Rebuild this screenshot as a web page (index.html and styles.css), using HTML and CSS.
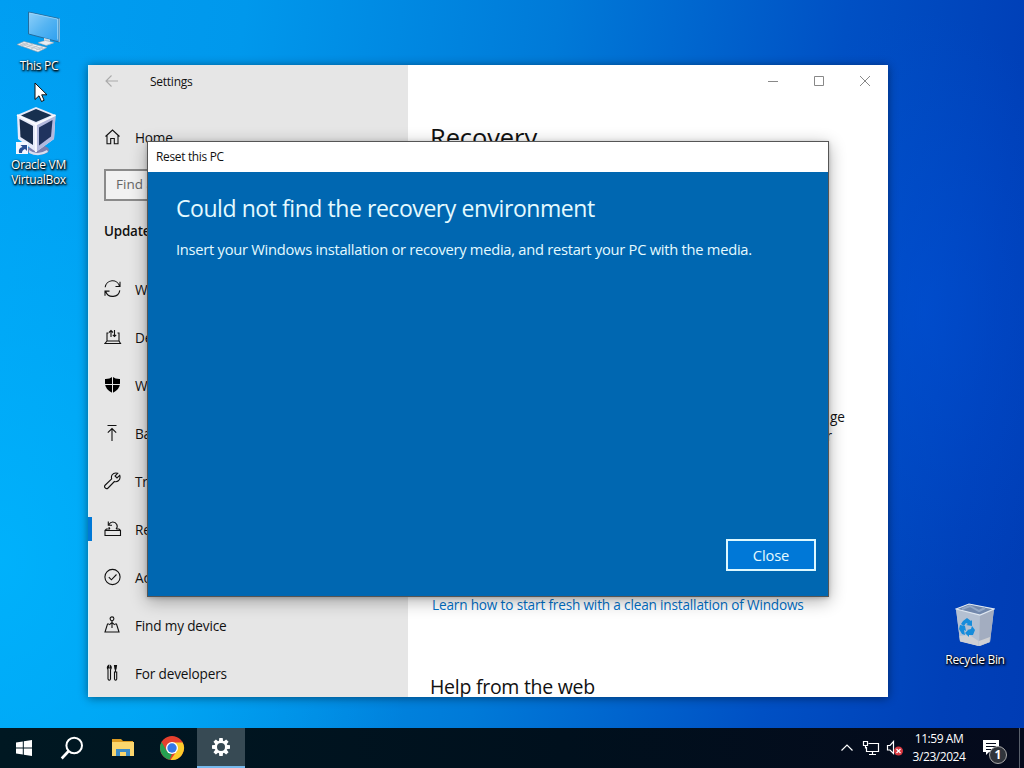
FILE: index.html
```html
<!DOCTYPE html>
<html lang="en">
<head>
<meta charset="utf-8">
<title>Desktop</title>
<link rel="stylesheet" href="styles.css">
</head>
<body>
<div class="desktop">

  <div class="shortcut this-pc">
    <svg width="44" height="44" viewBox="0 0 44 44">
      <defs>
        <linearGradient id="screen" x1="0" y1="0" x2="1" y2="1"><stop offset="0" stop-color="#8fd0fa"/><stop offset=".5" stop-color="#55b4f2"/><stop offset="1" stop-color="#2c9ff0"/></linearGradient>
      </defs>
      <path d="M11.500 2 42 8.500V32L11.500 24Z" fill="url(#screen)" stroke="#236c9e" stroke-width="1"/>
      <path d="M12.500 3 40.500 9V29.500" fill="none" stroke="#a8dcfc" stroke-width=".7"/>
      <path d="M42.200 8.500V32" stroke="#b8cddb" stroke-width="1"/>
      <path d="M27 28v3l-6 2 9 2.500 7-2.500-4-1v-2.500z" fill="#cfdce6"/>
      <path d="m21 32.500 7.500-2 8.500 2-8 3z" fill="#e8eef3" stroke="#8799a8" stroke-width=".5"/>
      <path d="m7 31.500 23 6-9 4.500L0 34.500Z" fill="#eef1f4" stroke="#8b9cab" stroke-width=".6"/>
      <path d="m5 33 22 6M3 34l21 6M11 33l-7 3m12-2-7 3.500m12-2-7 3.500m12-2-7 3" stroke="#b2bcc5" stroke-width=".8"/>
    </svg>
    <span>This PC</span>
  </div>

  <div class="shortcut virtualbox">
    <svg width="46" height="50" viewBox="0 0 46 50">
      <ellipse cx="22" cy="43" rx="11" ry="5" fill="#7a7fae"/>
      <path d="M13 43q8 6 18 0l1 2q-9 6-19 1z" fill="#d9def0"/>
      <path d="M20 0 39.500 8 38 32 20 45 2 32 1 8Z" fill="#e6eafa"/>
      <path d="M20 18 39.500 8 38 32 20 45Z" fill="#b3b9de"/>
      <path d="M20 2 35.500 8.300 20 15 5 8.500Z" fill="#17304f"/>
      <path d="M3.500 12 17 19V38L4.500 30Z" fill="#1a2c4b"/>
      <path d="M23 20.500 36.500 13 35 29.500 23 38.500Z" fill="#1f335e"/>
      <path d="m1 8 19 9.500L39.500 8M20 18v27" fill="none" stroke="#fafbff" stroke-width="1.800"/>
      <path d="M0 35h12v12H0z" fill="#f4f7ff"/>
      <path d="M3 46q-1-5 3.500-6l-2-2H11v6l-2-2q-3 1-3 4z" fill="#2a4f94"/>
    </svg>
    <span>Oracle VM</span><span>VirtualBox</span>
  </div>

  <div class="shortcut recycle">
    <svg width="40" height="46" viewBox="0 0 40 46">
      <path d="M1 6 14 1 39 6 35 39 25 43 5 38Z" fill="#b9c3d0"/>
      <path d="M1 6 25 12 24 43 5 38Z" fill="#b4c0d2"/>
      <path d="M25 12 39 6 35 39 24 43Z" fill="#a3adc0"/>
      <path d="M1 6 14 1 39 6 25 12Z" fill="#7288ac" stroke="#dfe7f1" stroke-width="1.200"/>
      <path d="m7 6 8-3 9 5 6-3" fill="none" stroke="#94a8c6" stroke-width="2"/>
      <path d="m4.500 33 10-1 9 6v5L5 38.500zM24 38l11-4-.5 5-10.500 4z" fill="#cfd0d4"/>
      <g fill="#168cdb"><path d="m8 18 4-3 4 3 1-1v6l-6-1 2-1-2-1-2 3-3-2z"/><path d="m5 22 5 1 1 5-2-1 1 5-3-1-3-5z"/><path d="m12 27 4-1 1-3 3 4-2 5h-4v2l-4-4 3-3z"/></g>
    </svg>
    <span>Recycle Bin</span>
  </div>

  <section class="window">
    <nav class="side">
      <header class="side-title">
        <svg width="14" height="12" viewBox="0 0 14 12" class="ln muted"><path d="M6.500.5 1 6l5.500 5.500M1 6h12"/></svg>
        <span>Settings</span>
      </header>
      <div class="row home"><svg viewBox="0 0 18 18" class="ln"><path d="M1.500 8.500 8.500 2l7 6.500M3 7.500v8.300h3.700v-5.300h3.600v5.300H14V7.500"/></svg><span>Home</span></div>
      <div class="search">Find a setting</div>
      <h2>Update &amp; Security</h2>
      <ul>
        <li class="row"><svg viewBox="0 0 18 18" class="ln"><path d="M1.200 7.200A7.300 7.300 0 0 1 15.500 6.200M16 1.800v4.700h-4.500M15.800 10.300A7.300 7.300 0 0 1 1.700 11.500M1 15.800v-4.700h4.500"/></svg><span>Windows Update</span></li>
        <li class="row"><svg viewBox="0 0 18 18" class="ln"><path d="M4.500 5H3v8h12V5h-1.500M3 13l-2 2.500h15.500L15 13M7 9V2.500M5 4.500l2-2 2 2M10.500 2v6.500M8.800 6.800l1.700 1.700 1.700-1.700"/></svg><span>Delivery Optimization</span></li>
        <li class="row"><svg viewBox="0 0 18 18"><path d="M8.500.8Q11.500 3.200 16 3v4.200q0 6-7.500 9.800Q1 13.200 1 7.200V3Q5.500 3.200 8.500.8Z"/><path d="M1 8.500h15M8.500 0v18" stroke="#e6e6e6" stroke-width="1"/></svg><span>Windows Security</span></li>
        <li class="row"><svg viewBox="0 0 18 18" class="ln"><path d="M3.500 1.500h9M8 17V4.500M3.800 8.700 8 4.500l4.200 4.200"/></svg><span>Backup</span></li>
        <li class="row"><svg viewBox="0 0 18 18" class="ln"><path d="M15.700 3.300 13 6l-2-2 2.700-2.700Q10 .2 8 3q-1 1.700-.3 3.800L1.300 13a2 2 0 0 0 2.800 3l6.300-6.500q2.200.8 4.300-1 2-2.300 1-5.200Z"/></svg><span>Troubleshoot</span></li>
        <li class="row active"><svg viewBox="0 0 18 18" class="ln"><path d="M1 10.500h15.500v5H1zM1 10.500l1.500-1.500H6M16.500 10.500 15 9h-3M6 9q-1-1-1-2M12 9q2-2 .8-4.500Q11.500 2 8.800 2 6.300 2 5 4.500M4.300 1.500v3.700H8"/></svg><span>Recovery</span></li>
        <li class="row"><svg viewBox="0 0 18 18" class="ln"><circle cx="8.500" cy="9" r="7.600"/><path d="m4.800 9.200 2.600 2.600L12.500 6.500"/></svg><span>Activation</span></li>
        <li class="row"><svg viewBox="0 0 18 18" class="ln"><circle cx="8" cy="2.800" r="1.900"/><path d="M8 4.700V12M5 8H3.500L1 16h14l-2.500-8H11M5.200 8.800 8 6.500l2.800 2.300"/></svg><span>Find my device</span></li>
        <li class="row"><svg viewBox="0 0 18 18" class="ln"><path d="M4.500 1.500Q2.500 3 4 5.800V15q1.300 2.500 2.500 0V5.800Q8.200 3 6.200 1.500V4H4.500ZM11.500 1v7M10.500 8h2.200v7q-1.100 2.500-2.200 0ZM10.500 1.500h2L12 5h-1z"/></svg><span>For developers</span></li>
      </ul>
    </nav>
    <main class="content">
      <header class="caption ln">
        <svg width="12" height="12" viewBox="0 0 12 12"><path d="M1 6.500h10"/></svg>
        <svg width="12" height="12" viewBox="0 0 12 12"><path d="M1.500 1.500h9v9h-9z"/></svg>
        <svg width="12" height="12" viewBox="0 0 12 12"><path d="m1 1 10 10M11 1 1 11"/></svg>
      </header>
      <h1>Recovery</h1>
      <p class="tail"><span>ge</span><span class="second">r</span></p>
      <a class="link">Learn how to start fresh with a clean installation of Windows</a>
      <h3>Help from the web</h3>
    </main>
  </section>

  <section class="dialog">
    <header>Reset this PC</header>
    <div class="dialog-body">
      <h2>Could not find the recovery environment</h2>
      <p>Insert your Windows installation or recovery media, and restart your PC with the media.</p>
      <button>Close</button>
    </div>
  </section>

  <svg class="cursor" width="14" height="21" viewBox="0 0 14 21"><path d="M1 1v16.500l4-3.700 2.500 5.700 2.600-1.200-2.400-5.500H13Z" fill="#fff" stroke="#111" stroke-width="1"/></svg>

  <footer class="taskbar">
    <div class="apps">
      <div class="app"><svg width="18" height="18" viewBox="0 0 18 18" fill="#fff"><path d="M1 3.400 7.800 2.500v6H1zM8.800 2.300 17 1v7.500H8.800zM1 9.500h6.800v6L1 14.600zM8.800 9.500H17V17l-8.200-1.300z"/></svg></div>
      <div class="app search-app"><svg width="24" height="24" viewBox="0 0 24 24" fill="none" stroke="#fff" stroke-width="2"><circle cx="14.200" cy="9.500" r="7.800"/><path d="m8.700 15-7 7.500" stroke-width="2.600"/></svg></div>
      <div class="app"><svg width="24" height="22" viewBox="0 0 24 22"><path d="M1 2h9l2 2h10v4H1z" fill="#dc9b22"/><path d="M1 5h22v14H1z" fill="#fbd66d"/><path d="M5 12h14v7h-4v-4H9v4H5z" fill="#3c8bc7"/></svg></div>
      <div class="app"><svg width="26" height="26" viewBox="0 0 26 26"><circle cx="13" cy="13" r="12" fill="#e4402e"/><path d="M2.600 7 7.800 16 13 19l-2.500 5.700A12 12 0 0 1 2.600 7Z" fill="#26a051"/><path d="M13 7.500h10.700A12 12 0 0 1 11.500 24.900L18 15.700Z" fill="#fccc2c"/><circle cx="13" cy="13" r="6" fill="#fff"/><circle cx="13" cy="13" r="4.700" fill="#3478e6"/></svg></div>
      <div class="app current"><svg width="20" height="20" viewBox="-10 -10 20 20"><g fill="#fff"><path id="t" d="M-1.700-9h3.400l.5 4h-4.400z"/><use href="#t" transform="rotate(45)"/><use href="#t" transform="rotate(90)"/><use href="#t" transform="rotate(135)"/><use href="#t" transform="rotate(180)"/><use href="#t" transform="rotate(225)"/><use href="#t" transform="rotate(270)"/><use href="#t" transform="rotate(315)"/></g><circle r="5.200" fill="none" stroke="#fff" stroke-width="2.400"/></svg></div>
    </div>
    <div class="tray">
      <svg width="14" height="10" viewBox="0 0 14 10" class="ln light"><path d="m1.500 7.500 5.500-5.500 5.500 5.500"/></svg>
      <svg width="18" height="16" viewBox="0 0 18 16" class="ln light"><path d="M6.500 3.500h10v8h-12V7M10.500 11.500v3M7 14.500h7M1.500 1.500h4v4h-4zM3.500 5.500v3"/></svg>
      <svg width="18" height="16" viewBox="0 0 18 16"><path d="M1.500 5.500H4L7.500 1.500v12L4 10H1.500z" fill="none" stroke="#fff" stroke-width="1.200"/><circle cx="12.500" cy="11" r="4.500" fill="#d83840"/><path d="m10.500 9 4 4m0-4-4 4" stroke="#fff" stroke-width="1.200"/></svg>
      <div class="clock"><span>11:59 AM</span><span>3/23/2024</span></div>
      <div class="notice"><svg width="18" height="18" viewBox="0 0 18 18"><path d="M1 1h16v12H7l-3 3v-3H1z" fill="#fff"/><path d="M4 4.500h10M4 7.500h10M4 10.500h7" stroke="#050b1c" stroke-width="1.200"/></svg><b>1</b></div>
      <i class="peek"></i>
    </div>
  </footer>
</div>
</body>
</html>
```
FILE: styles.css
```css
* { box-sizing: border-box; }
body { margin: 0; overflow: hidden; font-family: "Open Sans", "Noto Sans", sans-serif; color: #111; }
h1, h2, h3, p, ul { margin: 0; padding: 0; font-weight: 400; }
svg { display: block; flex: none; }
.desktop {
  position: relative; width: 1024px; height: 768px; overflow: hidden; white-space: nowrap;
  background:
    radial-gradient(ellipse 170px 300px at 925px 310px, rgba(0,82,218,.5), rgba(0,82,218,0)),
    radial-gradient(ellipse 420px 560px at 0 560px, rgba(0,184,255,.75), rgba(0,184,255,0)),
    linear-gradient(97deg, #009ef2 0%, #0098ec 22%, #007ad8 50%, #0050c4 76%, #0040b8 92%, #003cb4 100%);
}
.ln { fill: none; stroke: #111; stroke-width: 1.100; }
.muted { stroke: #aaa; }
.light { stroke: #fff; stroke-width: 1.200; }

.shortcut { position: absolute; display: flex; flex-direction: column; align-items: center; color: #fff; font-size: 12px; line-height: 15px; letter-spacing: -.3px; text-shadow: 0 1px 2px #000, 1px 1px 2px #000, 1px 1px 3px rgba(0,0,0,.7); }
.this-pc { left: 2px; top: 10px; width: 74px; }
.this-pc svg { margin-bottom: 4px; }
.virtualbox { left: 1px; top: 107px; width: 75px; }
.recycle { left: 935px; top: 603px; width: 80px; }
.recycle svg { margin-bottom: 3px; }

.window { position: absolute; left: 88px; top: 65px; width: 800px; height: 632px; display: flex; background: #fff; overflow: hidden; box-shadow: 0 1px 9px rgba(0,0,0,.45); }
.side { width: 320px; background: #e6e6e6; font-size: 13.600px; letter-spacing: -.17px; display: flex; flex-direction: column; border-left: 1px solid #d5f3fd; }
.side-title { height: 32px; display: flex; align-items: center; gap: 31px; padding-left: 16px; font-size: 12px; letter-spacing: -.25px; }
.side-title span { padding-top: 1px; }
.row { height: 48px; display: flex; align-items: center; gap: 13.500px; padding-left: 14.500px; }
.row svg { width: 18px; height: 18px; }
.row span { padding-top: 1px; }
.home { margin-top: 16px; }
.home span { padding-top: 0; }
.search { margin: 8px 16px 0 15px; height: 32px; border: 2px solid #8a8a8a; background: #f1f1f1; padding: 0 10px; font-size: 13.500px; letter-spacing: 0; line-height: 27px; color: #666; }
.side h2 { margin: 20px 0 0 15px; height: 44px; font-size: 13.400px; line-height: 21px; font-weight: 600; }
.side ul { list-style: none; }
.active { position: relative; }
.active::before { content: ""; position: absolute; left: -1px; top: 12px; width: 4px; height: 24px; background: #0078d7; }
.content { flex: 1; display: flex; flex-direction: column; padding-left: 22px; }
.content > * { flex: none; }
.caption { height: 36px; display: flex; align-items: flex-start; justify-content: flex-end; gap: 34px; padding: 10px 17px 0 0; stroke: #888; stroke-width: 1; }
.content h1 { margin-top: 18px; height: 36px; font-size: 25.500px; line-height: 36px; letter-spacing: -.1px; }
.tail { margin: 252px 43px 0 0; height: 38px; display: flex; flex-direction: column; align-items: flex-end; font-size: 13.600px; line-height: 19px; }
.second { margin-right: 13px; }
.link { margin: 150px 0 0 2px; font-size: 13.600px; letter-spacing: -.17px; line-height: 20px; color: #0070c8; }
.content h3 { margin-top: 58px; font-size: 19.500px; letter-spacing: -.27px; line-height: 28px; }

.dialog { position: absolute; left: 147px; top: 141px; width: 682px; height: 456px; display: flex; flex-direction: column; border: 1px solid #555; box-shadow: 0 4px 16px rgba(0,0,0,.32), 0 1px 4px rgba(0,0,0,.2); background: #0067b1; color: #e4faff; }
.dialog header { height: 30px; padding-left: 8px; background: #fff; color: #111; font-size: 11.900px; letter-spacing: -.3px; line-height: 29px; }
.dialog-body { flex: 1; display: flex; flex-direction: column; padding: 20px 12px 25px 28px; }
.dialog h2 { font-size: 23px; line-height: 33px; letter-spacing: -.44px; }
.dialog p { margin-top: 14px; font-size: 14.700px; letter-spacing: -.26px; line-height: 20px; }
.dialog button { margin: auto 0 0 auto; width: 90px; height: 32px; padding: 0; border: 2px solid #dcf8ff; background: #0078d7; color: #e4faff; font: 14.700px "Open Sans", sans-serif; letter-spacing: -.15px; }
.cursor { position: absolute; left: 34px; top: 82px; }

.taskbar { position: absolute; left: 0; top: 728px; width: 1024px; height: 40px; display: flex; justify-content: space-between; background: linear-gradient(90deg, #001822, #00101d 55%, #050a1c); color: #fff; }
.apps { display: flex; }
.app { width: 49.200px; display: flex; align-items: center; justify-content: center; }
.app:first-child svg { margin-right: 2px; }
.search-app svg { margin-right: 4px; }
.current { width: 48px; background: #374a54; border-bottom: 2px solid #76b9ed; }
.tray { display: flex; align-items: center; }
.tray > svg { margin-right: 8px; }
.tray > svg:nth-child(2) { margin-right: 6px; }
.clock { width: 64px; margin-left: -5px; display: flex; flex-direction: column; align-items: center; font-size: 12px; letter-spacing: -.45px; line-height: 18px; }
.notice { position: relative; margin-left: 11px; width: 37px; }
.notice b { position: absolute; left: 7px; top: 7px; width: 18px; height: 18px; border: 1px solid #aaa; border-radius: 50%; background: #30343b; font-size: 12px; line-height: 16px; text-align: center; }
.peek { width: 5px; height: 40px; border-left: 1px solid #59606c; }
```
